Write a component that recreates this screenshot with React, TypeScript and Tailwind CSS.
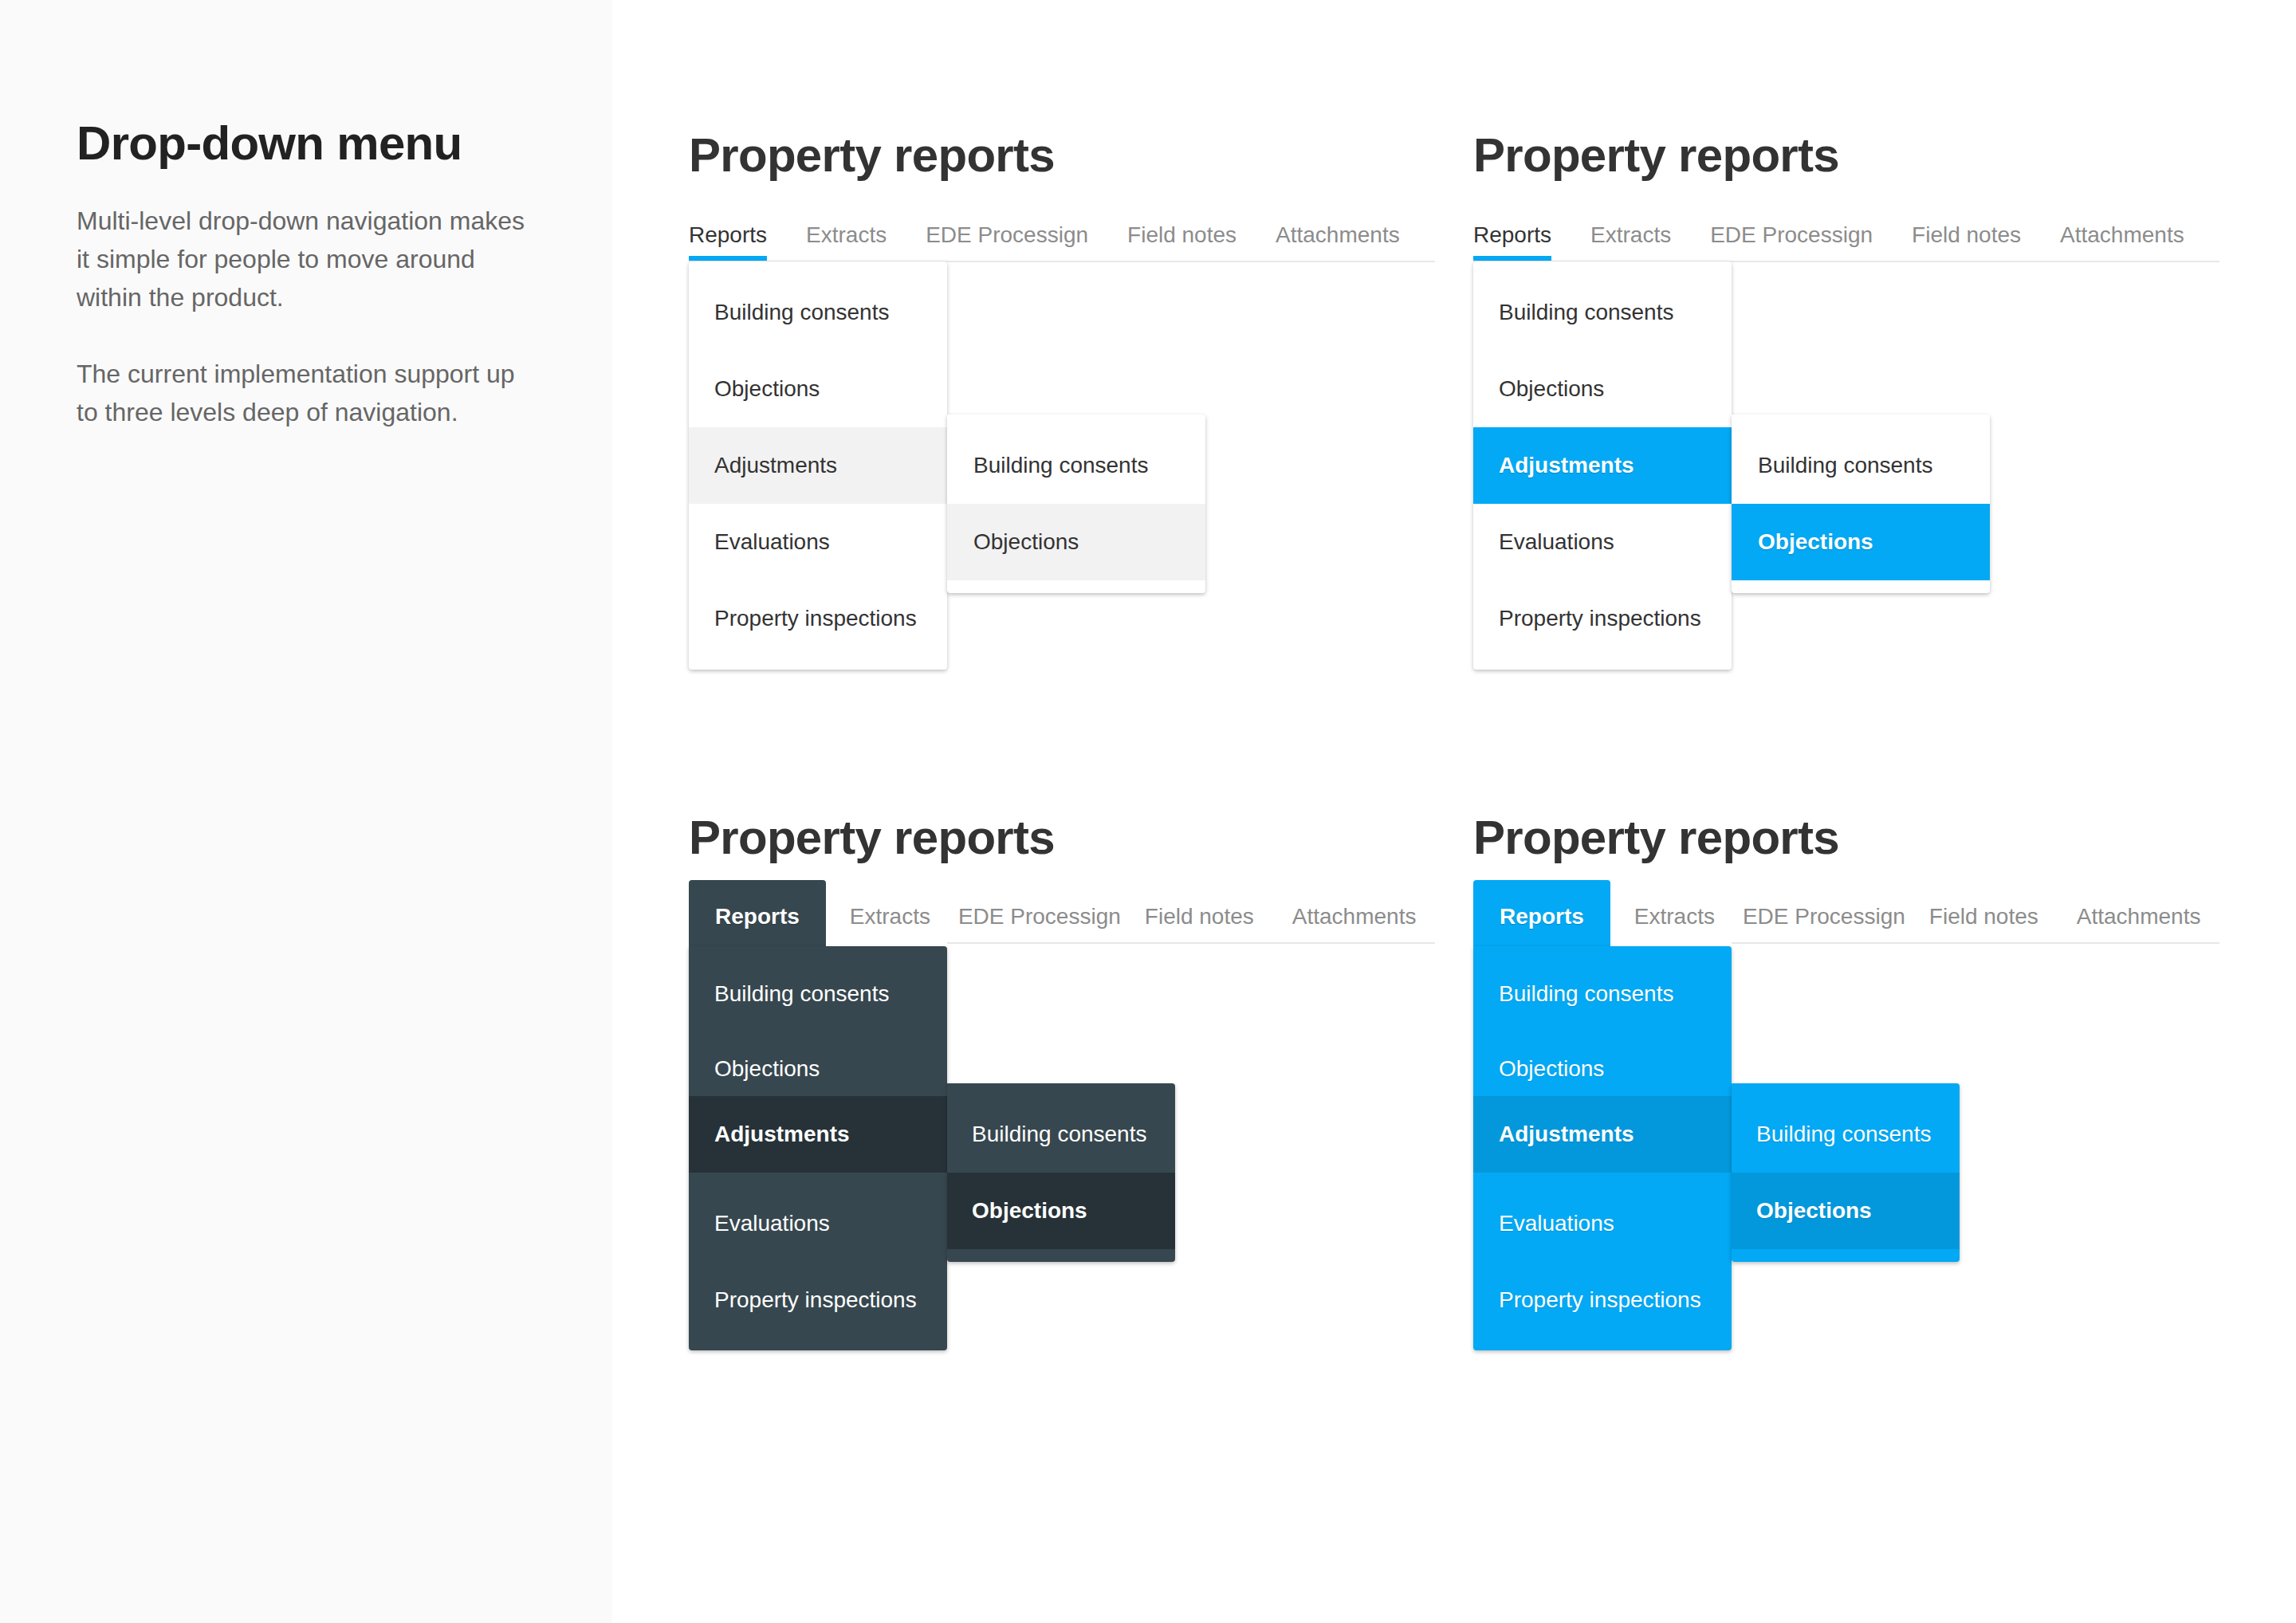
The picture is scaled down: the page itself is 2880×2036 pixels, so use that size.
import React from "react";

type Variant = "hover" | "active" | "dark" | "blue";

const tabs = ["Reports", "Extracts", "EDE Processign", "Field notes", "Attachments"];
const menuItems = ["Building consents", "Objections", "Adjustments", "Evaluations", "Property inspections"];
const subItems = ["Building consents", "Objections"];

// filled variants have uneven rows in the mockup
const filledRowHeights = ["h-[120px]", "h-[68px]", "h-[96px]", "h-[128px]", "h-[64px]"];

const themes: Record<Variant, { menu: string; hi: string; box: string }> = {
  hover: {
    menu: "bg-white text-[#333]",
    hi: "bg-[#f2f2f2]",
    box: "",
  },
  active: {
    menu: "bg-white text-[#333]",
    hi: "bg-[#03a9f4] text-white font-bold [text-shadow:0_1px_1px_rgba(0,0,0,0.2)]",
    box: "",
  },
  dark: {
    menu: "bg-[#37474f] text-white",
    hi: "bg-[#263238] font-bold",
    box: "bg-[#37474f]",
  },
  blue: {
    menu: "bg-[#03a9f4] text-white [text-shadow:0_1px_1px_rgba(0,0,0,0.12)]",
    hi: "bg-[#0398dc] font-bold",
    box: "bg-[#03a9f4]",
  },
};

function UnderlineTabs() {
  return (
    <div className="mt-[23px] flex gap-[49px] border-b-2 border-[#e8e8e8]">
      {tabs.map((t, i) => (
        <div
          key={t}
          className={`relative h-[79px] pt-[31px] text-[28px] leading-[32px] ${
            i === 0 ? "text-[#333]" : "text-[#8c8c8c]"
          }`}
        >
          {t}
          {i === 0 && <span className="absolute bottom-0 left-0 right-0 h-[6px] bg-[#03a9f4]" />}
        </div>
      ))}
    </div>
  );
}

function FilledTabs({ box }: { box: string }) {
  return (
    <div className="mt-[23px] flex items-start">
      <div
        className={`h-[83px] rounded-t-[4px] px-[33px] pt-[30px] text-[28px] font-bold leading-[32px] text-white [text-shadow:0_1px_1px_rgba(0,0,0,0.2)] ${box}`}
      >
        Reports
      </div>
      <div className="relative flex h-[80px] flex-1 pt-[30px] text-[28px] leading-[32px] text-[#8c8c8c]">
        <span className="ml-[30px]">Extracts</span>
        <span className="ml-[35px]">EDE Processign</span>
        <span className="ml-[30px]">Field notes</span>
        <span className="ml-[48px]">Attachments</span>
        <span className="absolute bottom-0 left-[152px] right-0 h-[2px] bg-[#e8e8e8]" />
      </div>
    </div>
  );
}

function Menus({ variant }: { variant: Variant }) {
  const t = themes[variant];
  const filled = variant === "dark" || variant === "blue";

  return (
    <div className={`flex items-start ${filled ? "" : "-mt-[1px]"}`}>
      <div
        className={`relative w-[324px] shadow-[0_2px_5px_rgba(0,0,0,0.25)] ${t.menu} ${
          filled ? "rounded-b-[4px] rounded-tr-[4px] pb-[31px]" : "rounded-[4px] py-[16px]"
        }`}
      >
        {menuItems.map((item, i) => (
          <div
            key={item}
            className={`flex items-center pl-[32px] text-[28px] leading-[32px] ${
              filled ? filledRowHeights[i] : "h-[96px]"
            } ${i === 2 ? t.hi : ""}`}
          >
            {item}
          </div>
        ))}
      </div>
      <div
        className={`relative rounded-r-[4px] rounded-bl-[4px] py-[16px] shadow-[0_2px_5px_rgba(0,0,0,0.25)] ${t.menu} ${
          filled ? "mt-[172px] w-[286px]" : "mt-[192px] w-[324px]"
        }`}
      >
        {subItems.map((item, i) => (
          <div
            key={item}
            className={`flex h-[96px] items-center text-[28px] leading-[32px] ${
              filled ? "pl-[31px]" : "pl-[33px]"
            } ${i === 1 ? t.hi : ""}`}
          >
            {item}
          </div>
        ))}
      </div>
    </div>
  );
}

function Example({ variant }: { variant: Variant }) {
  const filled = variant === "dark" || variant === "blue";
  return (
    <section className="flex flex-col">
      <h2 className="text-[60px] font-bold leading-[60px] tracking-[-0.7px] text-[#333]">Property reports</h2>
      {filled ? <FilledTabs box={themes[variant].box} /> : <UnderlineTabs />}
      <Menus variant={variant} />
    </section>
  );
}

export default function App() {
  return (
    <div className="flex min-h-[2036px] w-full bg-white font-['Liberation_Sans',Arial,sans-serif]">
      <aside className="w-[768px] shrink-0 bg-[#fafafa] pl-[96px] pt-[150px]">
        <h1 className="text-[60px] font-bold leading-[60px] tracking-[-0.7px] text-[#222]">Drop-down menu</h1>
        <p className="mt-[43px] text-[32px] leading-[48px] text-[#666]">
          Multi-level drop-down navigation makes
          <br />
          it simple for people to move around
          <br />
          within the product.
        </p>
        <p className="mt-[48px] text-[32px] leading-[48px] text-[#666]">
          The current implementation support up
          <br />
          to three levels deep of navigation.
        </p>
      </aside>
      <main className="flex-1 pl-[96px] pt-[165px]">
        <div className="grid grid-cols-[936px_936px] gap-x-[48px] gap-y-[181px]">
          <Example variant="hover" />
          <Example variant="active" />
          <Example variant="dark" />
          <Example variant="blue" />
        </div>
      </main>
    </div>
  );
}
